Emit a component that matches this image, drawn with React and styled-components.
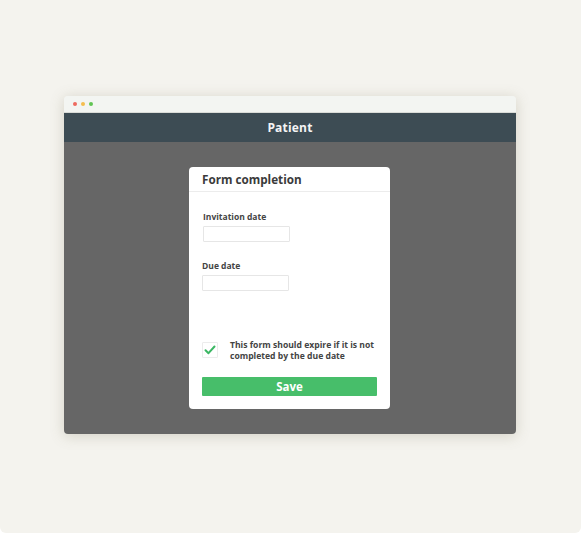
import styled, { createGlobalStyle } from "styled-components";

const Global = createGlobalStyle`
  body {
    margin: 0;
    background: #ffffff;
    font-family: "Open Sans", "Noto Sans", sans-serif;
  }
`;

function App() {
  return (
    <>
      <Global />
      <Page>
        <Window>
          <TitleBar>
            <Dot color="#ee6a5f" />
            <Dot color="#f5bd4f" />
            <Dot color="#61c454" />
          </TitleBar>
          <Header>Patient</Header>
          <Body>
            <Modal>
              <ModalTitle>Form completion</ModalTitle>
              <ModalContent>
                <Label>Invitation date</Label>
                <Input />
                <Label $top={18} $left={-1}>Due date</Label>
                <Input $left={-1} />
                <CheckRow>
                  <CheckBox>
                    <svg width="12" height="10" viewBox="0 0 12 10">
                      <path
                        d="M1.5 5.2 L4.5 8.2 L10.5 1.5"
                        fill="none"
                        stroke="#3cb764"
                        strokeWidth="2"
                        strokeLinecap="round"
                        strokeLinejoin="round"
                      />
                    </svg>
                  </CheckBox>
                  <CheckText>
                    This form should expire if it is not completed by the due date
                  </CheckText>
                </CheckRow>
                <SaveButton>Save</SaveButton>
              </ModalContent>
            </Modal>
          </Body>
        </Window>
      </Page>
    </>
  );
}

export default App;

const Page = styled.div`
  width: 581px;
  height: 533px;
  box-sizing: border-box;
  background: #f4f3ee;
  border-radius: 0 0 6px 6px;
  padding: 96px 0 0 64px;
`;

const Window = styled.div`
  width: 452px;
  height: 338px;
  border-radius: 4px;
  overflow: hidden;
  display: flex;
  flex-direction: column;
  box-shadow: 0 2px 14px rgba(120, 110, 80, 0.25);
`;

const TitleBar = styled.div`
  height: 17px;
  background: #f3f5f2;
  border-bottom: 1px solid #dadcd8;
  box-sizing: border-box;
  display: flex;
  align-items: center;
  gap: 4px;
  padding-left: 9px;
`;

const Dot = styled.span`
  width: 4px;
  height: 4px;
  border-radius: 50%;
  background: ${(p) => p.color};
`;

const Header = styled.div`
  height: 29px;
  background: #3d4c54;
  color: #f4f4f4;
  font-size: 12px;
  font-weight: 700;
  display: flex;
  align-items: center;
  justify-content: center;
  letter-spacing: 0.2px;
`;

const Body = styled.div`
  flex: 1;
  background: #666666;
  padding: 25px 0 0 125px;
`;

const Modal = styled.div`
  width: 201px;
  height: 242px;
  background: #ffffff;
  border-radius: 4px;
  display: flex;
  flex-direction: column;
`;

const ModalTitle = styled.div`
  height: 25px;
  box-sizing: border-box;
  border-bottom: 1px solid #ececec;
  padding: 0 0 0 13px;
  display: flex;
  align-items: center;
  font-size: 11.7px;
  font-weight: 700;
  color: #3a3a3a;
`;

const ModalContent = styled.div`
  padding: 19px 13px 0 14px;
  display: flex;
  flex-direction: column;
  align-items: flex-start;
`;

const Label = styled.div`
  font-size: 8.5px;
  font-weight: 700;
  color: #444;
  line-height: 11px;
  margin-top: ${(p) => p.$top || 0}px;
  margin-left: ${(p) => p.$left || 0}px;
`;

const Input = styled.div`
  width: 87px;
  height: 16px;
  box-sizing: border-box;
  border: 1px solid #e6e6e6;
  border-radius: 1px;
  margin-top: 4px;
  margin-left: ${(p) => p.$left || 0}px;
`;

const CheckRow = styled.div`
  margin-top: 48px;
  margin-left: -1px;
  display: flex;
  align-items: flex-start;
  gap: 12px;
`;

const CheckBox = styled.div`
  width: 16px;
  height: 16px;
  margin-top: 3px;
  box-sizing: border-box;
  border: 1px solid #ececec;
  border-radius: 1px;
  display: flex;
  align-items: center;
  justify-content: center;
`;

const CheckText = styled.div`
  font-size: 8.6px;
  font-weight: 700;
  color: #444;
  line-height: 11px;
  width: 152px;
  padding-top: 1px;
`;

const SaveButton = styled.button`
  margin-top: 15px;
  margin-left: -1px;
  width: 175px;
  height: 19px;
  border: none;
  border-radius: 1px;
  background: #47be6a;
  color: #ffffff;
  font-family: "Open Sans", "Noto Sans", sans-serif;
  font-size: 11.5px;
  font-weight: 700;
  padding: 0;
`;
